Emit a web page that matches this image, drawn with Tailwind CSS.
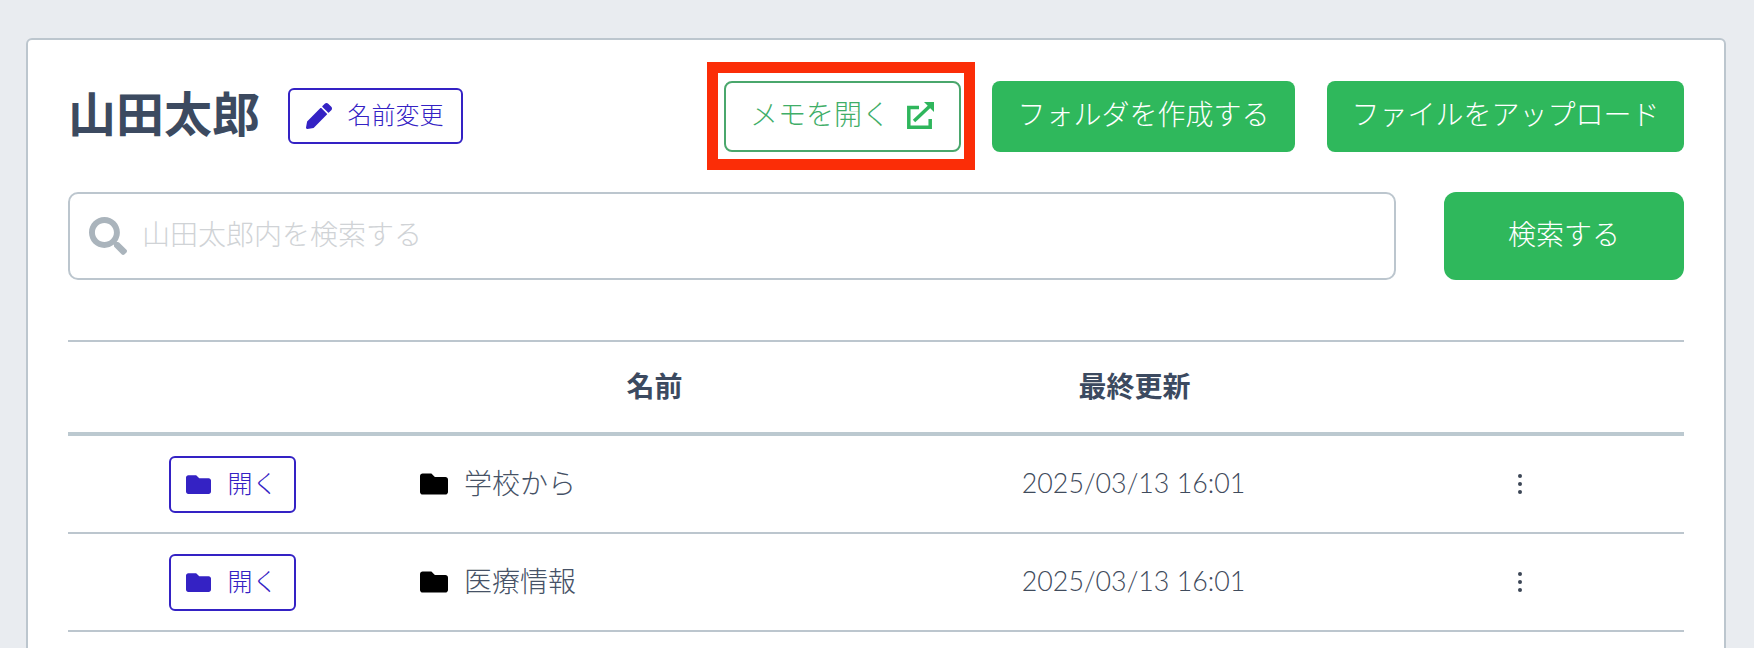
<!doctype html>
<html lang="ja">
<head>
<meta charset="utf-8">
<script src="https://cdn.jsdelivr.net/npm/@tailwindcss/browser@4"></script>
</head>
<body class="m-0 h-[648px] overflow-hidden bg-[#e9ecf0] font-['Lato','Noto_Sans_CJK_JP',sans-serif] text-[#465266]">
<div class="mt-[38px] mr-[28px] ml-[26px] h-[700px] rounded-[6px] border-2 border-[#bcc6ce] bg-white px-[40px] pt-[40px]">
  <div class="flex items-center">
    <h1 class="m-0 pb-[4px] text-[48px] leading-[68px] font-bold text-[#3c4a60]">山田太郎</h1>
    <button class="ml-[28px] flex h-[56px] w-[175px] items-center justify-center gap-[16px] rounded-[6px] border-2 border-[#3422c4] bg-white pr-[2px] text-[24px] font-light text-[#3422c4]">
      <svg class="size-[26px]" viewBox="0 0 512 512" fill="#3422c4"><path d="M497.900 142.100l-46.100 46.100c-4.700 4.700-12.300 4.700-17 0l-111-111c-4.700-4.700-4.700-12.300 0-17l46.100-46.100c18.700-18.700 49.100-18.700 67.900 0l60.100 60.100c18.800 18.700 18.800 49.100 0 67.900zM284.200 99.800L21.600 362.400.4 483.900c-2.900 16.400 11.400 30.600 27.800 27.800l121.500-21.300 262.600-262.600c4.700-4.700 4.700-12.300 0-17l-111-111c-4.800-4.700-12.400-4.700-17.100 0z"/></svg>
      <span class="pb-[2px]">名前変更</span>
    </button>
    <div class="relative ml-auto">
      <button class="flex h-[71px] w-[237px] items-center justify-center gap-[17px] rounded-[8px] border-2 border-[#4aa76c] bg-white text-[28px] font-light text-[#3fae68]">
        <span class="pb-[4px]">メモを開く</span>
        <svg class="size-[28px]" viewBox="0 0 28 28" fill="none" stroke="#2fb65c" stroke-width="3.500"><path d="M12 5.500H1.800v19.700h21.400V17"/><path d="M7 19L23 4"/><path d="M17 0h10v10z" fill="#2fb65c" stroke="none"/></svg>
      </button>
      <div class="pointer-events-none absolute -top-[19px] -right-[14px] -bottom-[18px] -left-[17px] border-[11px] border-[#fb2d07]"></div>
    </div>
    <button class="ml-[31px] h-[71px] w-[303px] rounded-[8px] bg-[#2fb85c] pb-[4px] text-[28px] font-light text-white">フォルダを作成する</button>
    <button class="ml-[32px] h-[71px] w-[357px] rounded-[8px] bg-[#2fb85c] pb-[4px] text-[28px] font-light text-white">ファイルをアップロード</button>
  </div>
  <div class="mt-[40px] flex items-center justify-between">
    <label class="flex h-[88px] w-[1328px] items-center gap-[15px] rounded-[10px] border-2 border-[#bcc6ce] bg-white pl-[19px]">
      <svg class="size-[38px] shrink-0" viewBox="0 0 512 512" fill="#aab4bc"><path d="M505 442.700L405.300 343c-4.500-4.500-10.600-7-17-7H372c27.600-35.300 44-79.700 44-128C416 93.100 322.900 0 208 0S0 93.100 0 208s93.100 208 208 208c48.300 0 92.700-16.400 128-44v16.300c0 6.400 2.500 12.500 7 17l99.700 99.700c9.400 9.400 24.600 9.400 33.900 0l28.300-28.300c9.400-9.400 9.400-24.600.1-34zM208 336c-70.700 0-128-57.200-128-128 0-70.700 57.200-128 128-128 70.700 0 128 57.200 128 128 0 70.700-57.200 128-128 128z"/></svg>
      <input class="h-full min-w-0 flex-1 bg-transparent pb-[4px] text-[28px] font-light outline-none placeholder:text-[#d0d3d6]" placeholder="山田太郎内を検索する">
    </label>
    <button class="h-[88px] w-[240px] rounded-[12px] bg-[#2fb85c] pb-[4px] text-[28px] font-light text-white">検索する</button>
  </div>
  <div class="mt-[60px] border-t-2 border-[#bcc6ce]">
    <div class="grid h-[94px] grid-cols-[328px_517px_443px_1fr] items-center border-b-4 border-[#bcc9d0] pb-[2px] text-center text-[28px] font-bold text-[#3c4a60]">
      <div></div><div>名前</div><div>最終更新</div><div></div>
    </div>
    <div class="grid h-[98px] grid-cols-[328px_517px_443px_1fr] items-center border-b-2 border-[#bcc6ce]">
      <div class="flex justify-center">
        <button class="flex h-[57px] w-[127px] items-center justify-center gap-[16px] rounded-[6px] border-2 border-[#3422c4] bg-white text-[25px] font-light text-[#3422c4]">
          <svg class="size-[25px]" viewBox="0 0 512 512" fill="#3422c4"><path d="M464 128H272l-64-64H48C21.490 64 0 85.490 0 112v288c0 26.510 21.490 48 48 48h416c26.510 0 48-21.490 48-48V176c0-26.510-21.490-48-48-48z"/></svg>
          開く
        </button>
      </div>
      <div class="flex items-center gap-[16px] pl-[24px] text-[28px] font-light">
        <svg class="size-[28px]" viewBox="0 0 512 512" fill="#000"><path d="M464 128H272l-64-64H48C21.490 64 0 85.490 0 112v288c0 26.510 21.490 48 48 48h416c26.510 0 48-21.490 48-48V176c0-26.510-21.490-48-48-48z"/></svg>
        <span class="pb-[2px]">学校から</span>
      </div>
      <div class="pr-[2px] pb-[2px] text-center text-[26.800px] font-light text-[#3f4b5c]">2025/03/13 16:01</div>
      <div class="flex justify-center">
        <svg class="h-[22px] w-[6px]" viewBox="0 0 6 22" fill="#3c4656"><circle cx="3" cy="3" r="2"/><circle cx="3" cy="11" r="2"/><circle cx="3" cy="19" r="2"/></svg>
      </div>
    </div>
    <div class="grid h-[98px] grid-cols-[328px_517px_443px_1fr] items-center border-b-2 border-[#bcc6ce]">
      <div class="flex justify-center">
        <button class="flex h-[57px] w-[127px] items-center justify-center gap-[16px] rounded-[6px] border-2 border-[#3422c4] bg-white text-[25px] font-light text-[#3422c4]">
          <svg class="size-[25px]" viewBox="0 0 512 512" fill="#3422c4"><path d="M464 128H272l-64-64H48C21.490 64 0 85.490 0 112v288c0 26.510 21.490 48 48 48h416c26.510 0 48-21.490 48-48V176c0-26.510-21.490-48-48-48z"/></svg>
          開く
        </button>
      </div>
      <div class="flex items-center gap-[16px] pl-[24px] text-[28px] font-light">
        <svg class="size-[28px]" viewBox="0 0 512 512" fill="#000"><path d="M464 128H272l-64-64H48C21.490 64 0 85.490 0 112v288c0 26.510 21.490 48 48 48h416c26.510 0 48-21.490 48-48V176c0-26.510-21.490-48-48-48z"/></svg>
        <span class="pb-[2px]">医療情報</span>
      </div>
      <div class="pr-[2px] pb-[2px] text-center text-[26.800px] font-light text-[#3f4b5c]">2025/03/13 16:01</div>
      <div class="flex justify-center">
        <svg class="h-[22px] w-[6px]" viewBox="0 0 6 22" fill="#3c4656"><circle cx="3" cy="3" r="2"/><circle cx="3" cy="11" r="2"/><circle cx="3" cy="19" r="2"/></svg>
      </div>
    </div>
  </div>
</div>
</body>
</html>
